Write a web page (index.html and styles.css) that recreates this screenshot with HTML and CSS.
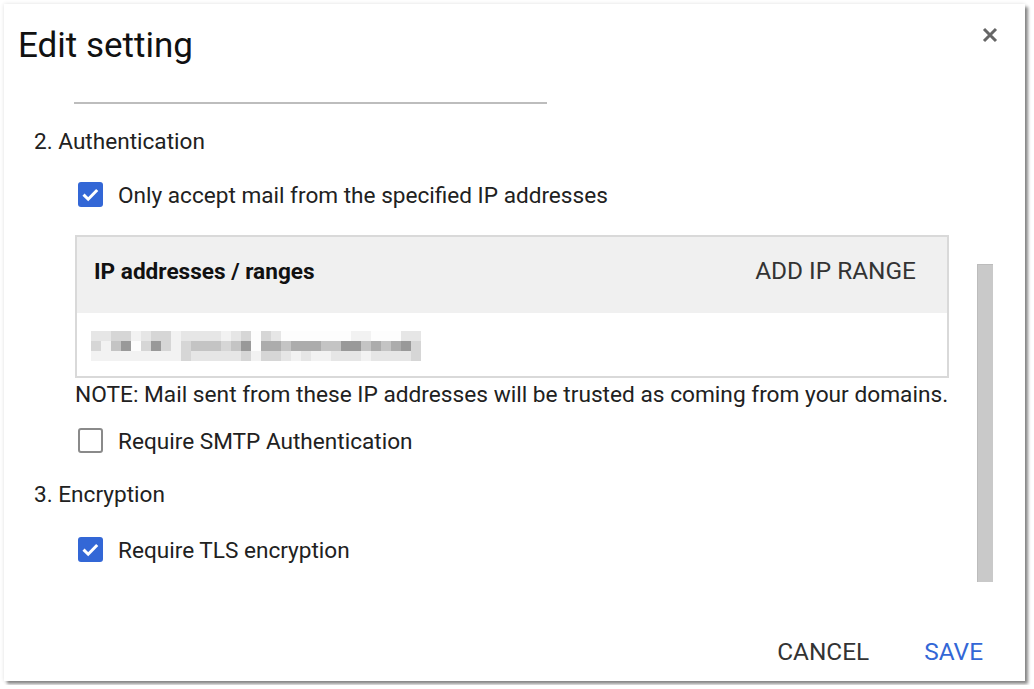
FILE: index.html
```html
<!DOCTYPE html>
<html>
<head>
<meta charset="utf-8">
<link rel="stylesheet" href="styles.css">
</head>
<body>
<div class="dialog">
  <div class="head">
    <h1 class="title">Edit setting</h1>
    <svg class="close" width="16" height="16" viewBox="0 0 16 16"><path d="M2 2 L14 14 M14 2 L2 14" stroke="#666" stroke-width="3" stroke-linecap="butt"/></svg>
  </div>
  <div class="body">
    <div class="content">
      <div class="divider"></div>
      <div class="section">2. Authentication</div>
      <div class="check-row first">
        <span class="box checked"><svg width="25" height="25" viewBox="0 0 25 25"><path d="M5.5 12.6 L10.2 17.2 L19.2 8" fill="none" stroke="#fff" stroke-width="3"/></svg></span>
        <span class="label">Only accept mail from the specified IP addresses</span>
      </div>
      <div class="table">
        <div class="thead">
          <span class="th">IP addresses / ranges</span>
          <span class="add">ADD IP RANGE</span>
        </div>
        <div class="trow">
          <div class="blur">
            <i class="c2"></i><i class="c2"></i><i class="c3"></i><i class="c3"></i><i class="c1"></i><i class="c2"></i><i class="c3"></i><i class="c3"></i><i class="c1"></i><i class="c2"></i><i class="c2"></i><i class="c2"></i><i class="c2"></i><i class="c1"></i><i class="c2"></i><i class="c3"></i><i class="c0"></i><i class="c3"></i><i class="c2"></i><i class="c0"></i><i class="c0"></i><i class="c0"></i><i class="c0"></i><i class="c0"></i><i class="c0"></i><i class="c0"></i><i class="c1"></i><i class="c1"></i><i class="c0"></i><i class="c0"></i><i class="c0"></i><i class="c2"></i><i class="c2"></i>
            <i class="c3"></i><i class="c1"></i><i class="c4"></i><i class="c6"></i><i class="c0"></i><i class="c3"></i><i class="c6"></i><i class="c3"></i><i class="c1"></i><i class="c3"></i><i class="c4"></i><i class="c4"></i><i class="c4"></i><i class="c3"></i><i class="c4"></i><i class="c6"></i><i class="c0"></i><i class="c5"></i><i class="c5"></i><i class="c4"></i><i class="c5"></i><i class="c5"></i><i class="c5"></i><i class="c4"></i><i class="c4"></i><i class="c6"></i><i class="c6"></i><i class="c4"></i><i class="c5"></i><i class="c4"></i><i class="c5"></i><i class="c6"></i><i class="c3"></i>
            <i class="c1"></i><i class="c1"></i><i class="c1"></i><i class="c1"></i><i class="c1"></i><i class="c1"></i><i class="c1"></i><i class="c1"></i><i class="c1"></i><i class="c3"></i><i class="c2"></i><i class="c2"></i><i class="c2"></i><i class="c2"></i><i class="c2"></i><i class="c3"></i><i class="c1"></i><i class="c3"></i><i class="c3"></i><i class="c2"></i><i class="c1"></i><i class="c2"></i><i class="c1"></i><i class="c1"></i><i class="c2"></i><i class="c2"></i><i class="c2"></i><i class="c1"></i><i class="c2"></i><i class="c2"></i><i class="c2"></i><i class="c2"></i><i class="c3"></i>
          </div>
        </div>
      </div>
      <div class="note">NOTE: Mail sent from these IP addresses will be trusted as coming from your domains.</div>
      <div class="check-row second">
        <span class="box"></span>
        <span class="label">Require SMTP Authentication</span>
      </div>
      <div class="section enc">3. Encryption</div>
      <div class="check-row third">
        <span class="box checked"><svg width="25" height="25" viewBox="0 0 25 25"><path d="M5.5 12.6 L10.2 17.2 L19.2 8" fill="none" stroke="#fff" stroke-width="3"/></svg></span>
        <span class="label">Require TLS encryption</span>
      </div>
    </div>
    <div class="scrolltrack"><div class="thumb"></div></div>
  </div>
  <div class="footer">
    <span class="btn cancel">CANCEL</span>
    <span class="btn save">SAVE</span>
  </div>
</div>
</body>
</html>
```
FILE: styles.css
```css
html, body {
  margin: 0;
  padding: 0;
  background: #fff;
}
body {
  padding: 4px;
  font-family: Roboto, "Liberation Sans", sans-serif;
  color: #212121;
}
.dialog {
  width: 1021px;
  height: 677px;
  background: #fff;
  box-shadow: 3px 3px 3px rgba(0,0,0,0.45), 0 0 4px rgba(0,0,0,0.12);
  display: flex;
  flex-direction: column;
}
.head {
  display: flex;
  justify-content: space-between;
  align-items: flex-start;
  padding: 20px 27px 0 14px;
}
.title {
  margin: 0;
  font-size: 35px;
  font-weight: 400;
  line-height: 44px;
  color: #111;
}
.close {
  margin-top: 3px;
}
.body {
  display: flex;
  flex: 1;
}
.content {
  display: flex;
  flex-direction: column;
  padding-left: 30px;
  width: 916px;
}
.divider {
  margin-top: 34px;
  margin-left: 40px;
  width: 473px;
  height: 2px;
  background: #bdbdbd;
}
.section {
  margin-top: 26px;
  font-size: 22.6px;
  line-height: 24px;
}
.section.enc {
  margin-top: 30px;
}
.check-row {
  display: flex;
  align-items: center;
  margin-left: 44px;
  height: 25px;
}
.check-row.first { margin-top: 28px; }
.check-row.second { margin-top: 21px; }
.check-row.third { margin-top: 30px; }
.box {
  width: 25px;
  height: 25px;
  box-sizing: border-box;
  border: 2px solid #8a8a8a;
  border-radius: 3px;
  display: flex;
  align-items: center;
  justify-content: center;
}
.box.checked {
  border: none;
  background: #3367d6;
}
.label {
  margin-left: 15px;
  font-size: 22.6px;
  line-height: 24px;
  padding-top: 3px;
}
.table {
  margin-top: 28px;
  margin-left: 41px;
  width: 874px;
  box-sizing: border-box;
  border: 2px solid #d9d9d9;
}
.thead {
  height: 76px;
  background: #f0f0f0;
  display: flex;
  align-items: center;
  justify-content: space-between;
  padding: 0 31px 0 17px;
}
.th {
  font-weight: 700;
  font-size: 22.6px;
  line-height: 24px;
  color: #111;
  margin-top: -6px;
}
.add {
  font-size: 24.4px;
  line-height: 24px;
  color: #333;
  margin-top: -8px;
}
.trow {
  height: 63px;
  display: flex;
  align-items: center;
  padding-left: 14px;
}
.blur {
  display: grid;
  grid-template-columns: repeat(33, 10px);
  grid-auto-rows: 10px;
  margin-top: 2px;
}
.blur i { display: block; }
.c0 { background: #fdfdfd; }
.c1 { background: #f2f2f2; }
.c2 { background: #e6e6e6; }
.c3 { background: #d6d6d6; }
.c4 { background: #c4c4c4; }
.c5 { background: #acacac; }
.c6 { background: #999999; }
.note {
  margin-top: 5px;
  margin-left: 41px;
  font-size: 22.7px;
  line-height: 24px;
  white-space: nowrap;
}
.scrolltrack {
  margin-left: 27px;
  padding-top: 196px;
}
.thumb {
  width: 16px;
  height: 318px;
  box-sizing: border-box;
  background: #c9c9c9;
  border-left: 1px solid #bcbcbc;
  border-top: 1px solid #bcbcbc;
}
.footer {
  display: flex;
  justify-content: flex-end;
  align-items: center;
  padding: 0 42px 7px 0;
  gap: 55px;
  height: 44px;
}
.btn {
  font-size: 24.4px;
  line-height: 24px;
}
.cancel { color: #333; }
.save { color: #3367d6; }
```
